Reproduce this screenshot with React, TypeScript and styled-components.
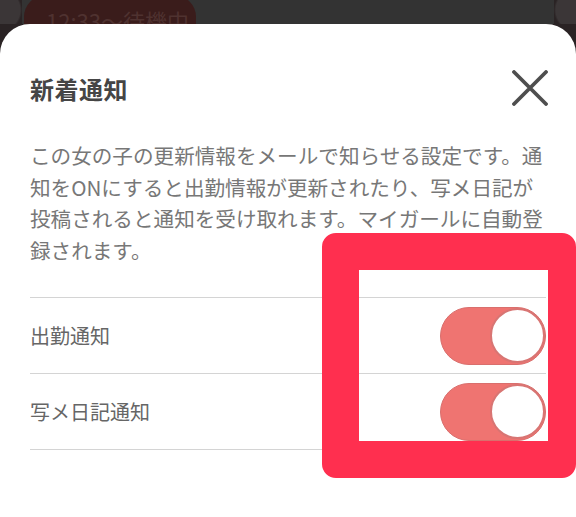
import React from "react"
import styled, { createGlobalStyle } from "styled-components"

const GlobalStyle = createGlobalStyle`
  html, body {
    margin: 0;
    padding: 0;
    background: #2a2324;
    font-family: "Noto Sans CJK JP", "Noto Sans", sans-serif;
  }
`

const settings = [
  { id: "shukkin", label: "出勤通知", on: true },
  { id: "diary", label: "写メ日記通知", on: true },
]

const Toggle: React.FC<{ on: boolean }> = ({ on }) => (
  <S.Track $on={on}>
    <S.Knob $on={on} />
  </S.Track>
)

const CloseIcon = () => (
  <svg width="36" height="36" viewBox="0 0 36 36">
    <path d="M2 2 L34 34 M34 2 L2 34" stroke="#4e4e4e" strokeWidth="3.8" strokeLinecap="round" />
  </svg>
)

export default function App() {
  return (
    <>
      <GlobalStyle />
      <S.Page>
        <S.Backdrop>
          <S.BackCard>
            <S.StatusPill>12:33～待機中</S.StatusPill>
          </S.BackCard>
        </S.Backdrop>

        <S.Sheet>
          <S.Header>
            <S.Title>新着通知</S.Title>
            <S.CloseButton aria-label="閉じる">
              <CloseIcon />
            </S.CloseButton>
          </S.Header>

          <S.Description>
            この女の子の更新情報をメールで知らせる設定です。通<br />
            知をONにすると出勤情報が更新されたり、写メ日記が<br />
            投稿されると通知を受け取れます。マイガールに自動登<br />
            録されます。
          </S.Description>

          <S.List>
            {settings.map((s) => (
              <S.Row key={s.id}>
                <S.Label>{s.label}</S.Label>
                <Toggle on={s.on} />
              </S.Row>
            ))}
          </S.List>
        </S.Sheet>

        <S.Highlight />
      </S.Page>
    </>
  )
}

const S = {
  Page: styled.div`
    position: relative;
    width: 576px;
    height: 517px;
    overflow: hidden;
    display: flex;
    flex-direction: column;
    background: #2a2324;
  `,

  Backdrop: styled.div`
    height: 24px;
    flex-shrink: 0;
    padding: 0 22px;
    overflow: hidden;
    display: flex;
    background: radial-gradient(circle at 0 10px, #3b3637 0, #3b3637 20px, transparent 22px),
      radial-gradient(circle at 100% 10px, #3b3637 0, #3b3637 20px, transparent 22px),
      #2a2324;
  `,

  BackCard: styled.div`
    flex: 1;
    margin-top: -24px;
    height: 80px;
    border-radius: 18px;
    background: #333333;
    display: flex;
    align-items: flex-start;
  `,

  StatusPill: styled.div`
    margin-top: 19px;
    margin-left: 2px;
    width: 172px;
    height: 50px;
    border-radius: 22px;
    background: #3a1c1b;
    color: #4f3230;
    font-size: 22px;
    line-height: 50px;
    padding-left: 22px;
    box-sizing: border-box;
    white-space: nowrap;
  `,

  Sheet: styled.div`
    flex: 1;
    background: #ffffff;
    border-radius: 30px 30px 0 0;
    padding: 0 30px;
    display: flex;
    flex-direction: column;
  `,

  Header: styled.div`
    display: flex;
    align-items: center;
    justify-content: space-between;
    height: 58px;
    margin-top: 35px;
  `,

  Title: styled.h2`
    margin: 0;
    font-size: 24px;
    font-weight: 700;
    color: #454545;
    letter-spacing: 0.5px;
  `,

  CloseButton: styled.button`
    border: 0;
    background: none;
    padding: 0;
    margin-right: -2px;
    display: flex;
    cursor: pointer;
  `,

  Description: styled.p`
    margin: 23px 0 0;
    font-size: 20.6px;
    line-height: 31.5px;
    color: #777777;
    white-space: nowrap;
  `,

  List: styled.div`
    margin-top: 31px;
    border-bottom: 1px solid #d4d4d4;
  `,

  Row: styled.div`
    display: flex;
    align-items: center;
    justify-content: space-between;
    height: 75px;
    border-top: 1px solid #d4d4d4;
  `,

  Label: styled.span`
    font-size: 20px;
    color: #666666;
  `,

  Track: styled.div<{ $on: boolean }>`
    width: 106px;
    height: 58px;
    border-radius: 29px;
    background: ${(p) => (p.$on ? "#ef7471" : "#dddddd")};
    display: flex;
    justify-content: ${(p) => (p.$on ? "flex-end" : "flex-start")};
    box-sizing: border-box;
    border: 1.5px solid ${(p) => (p.$on ? "#d96f6d" : "#cccccc")};
  `,

  Knob: styled.div<{ $on: boolean }>`
    width: 55px;
    height: 55px;
    border-radius: 50%;
    background: #ffffff;
    box-sizing: border-box;
    border: 2px solid ${(p) => (p.$on ? "#d87573" : "#cccccc")};
  `,

  Highlight: styled.div`
    position: absolute;
    left: 322px;
    top: 233px;
    width: 254px;
    height: 245px;
    box-sizing: border-box;
    border-style: solid;
    border-color: #ff2f4f;
    border-width: 37px 28px 37px 37px;
    border-radius: 14px;
    pointer-events: none;
  `,
}
